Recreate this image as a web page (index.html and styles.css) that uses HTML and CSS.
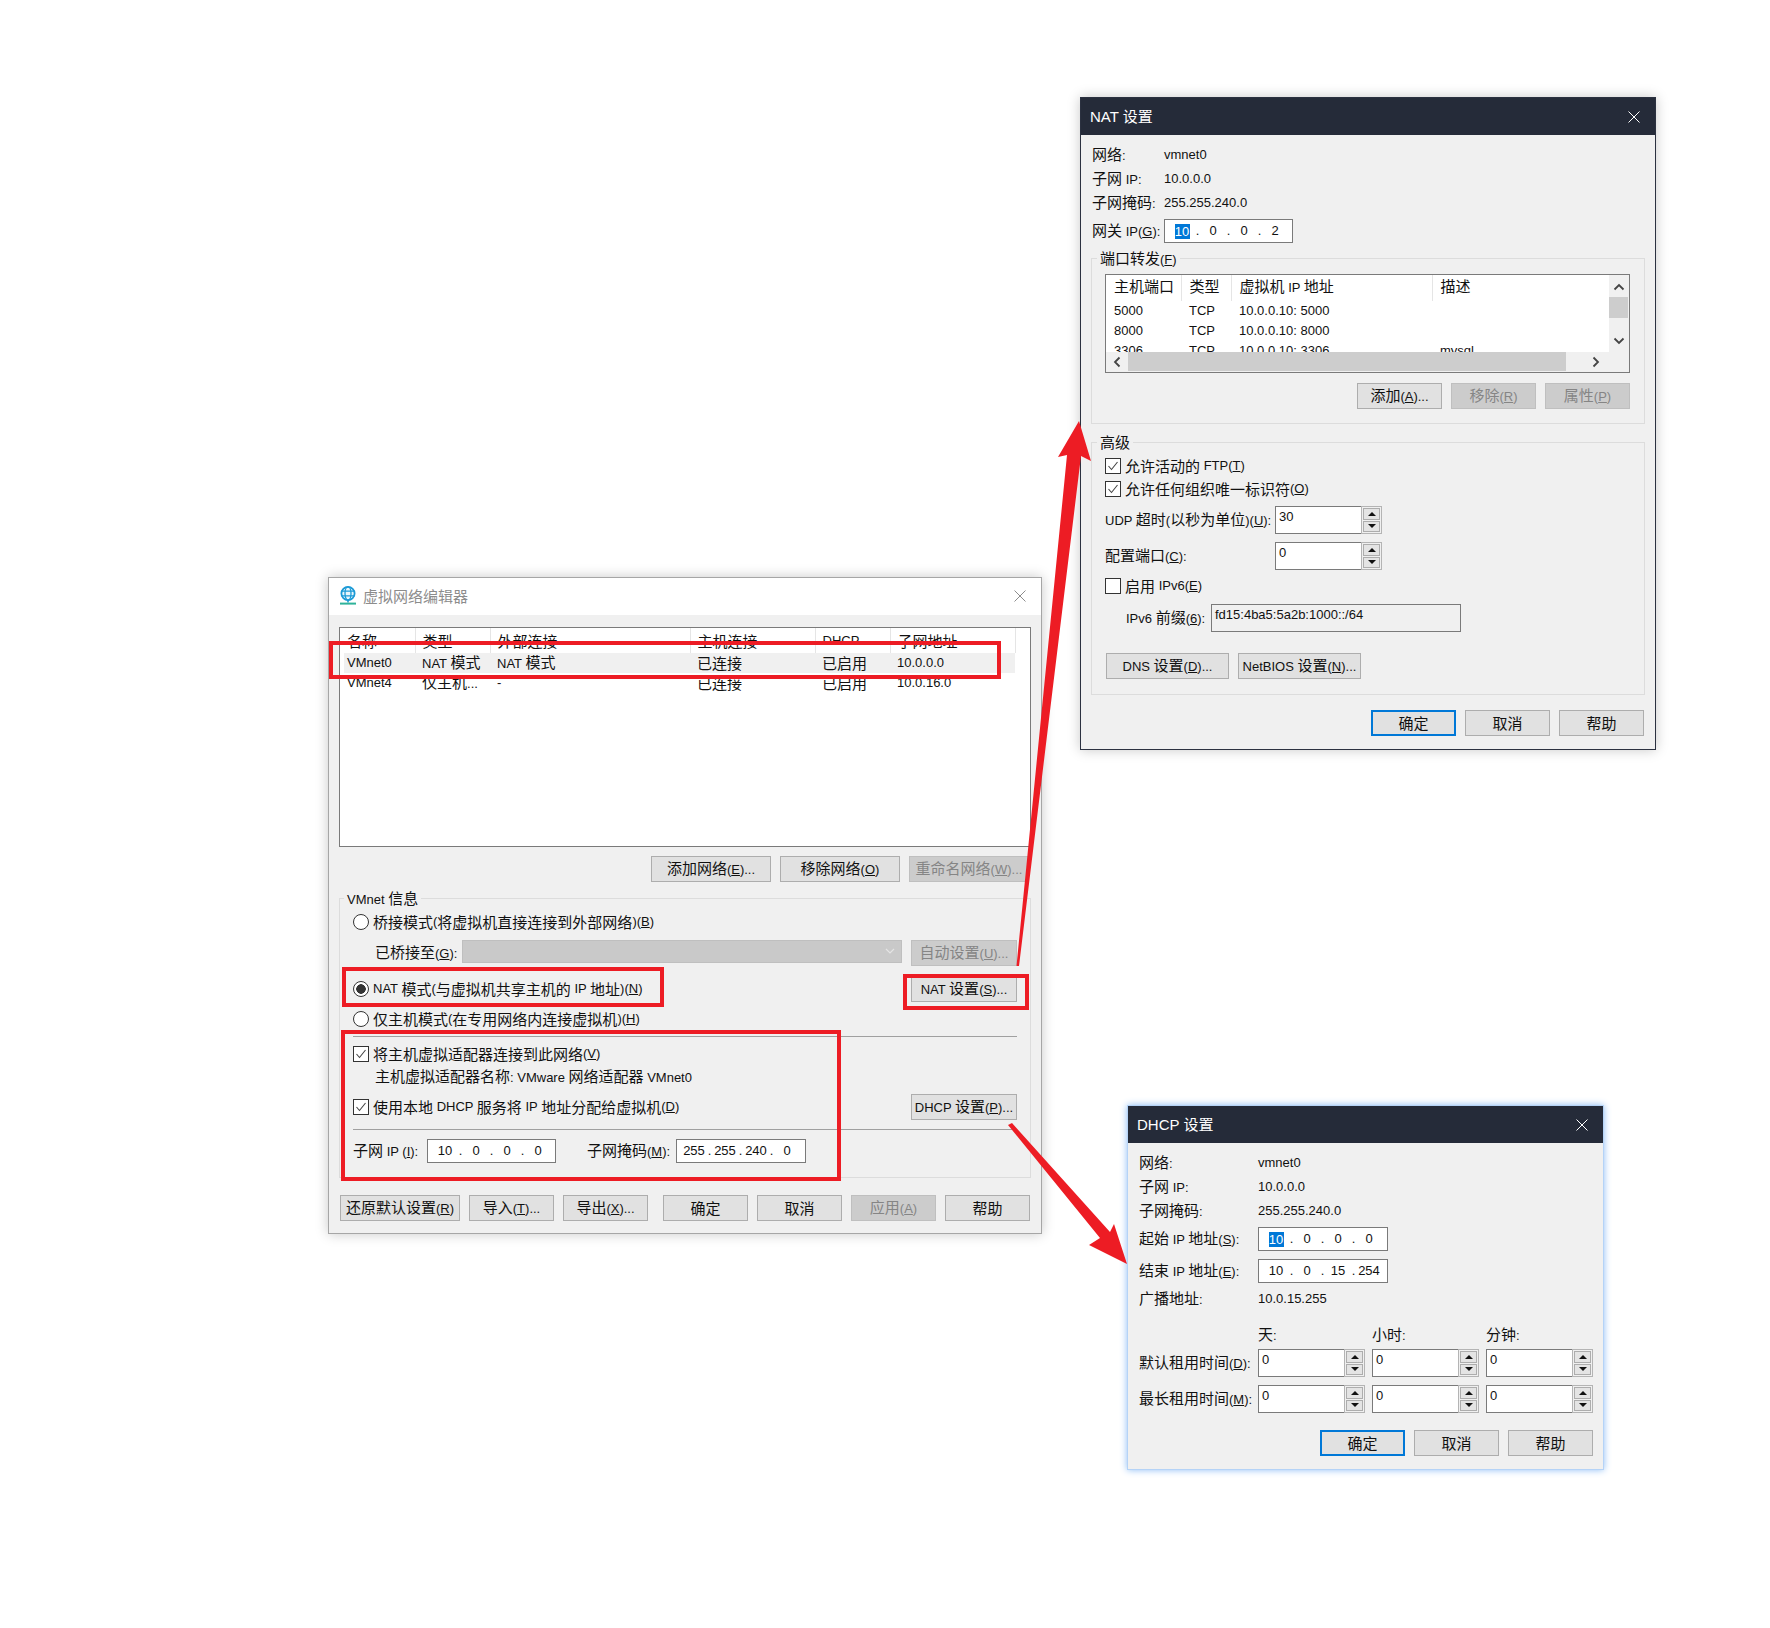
FILE: index.html
```html
<!DOCTYPE html>
<html lang="zh-CN">

<head>
    <meta charset="UTF-8">
    <title>虚拟网络编辑器</title>
    <link rel="stylesheet" href="styles.css">
</head>

<body>
    <!-- 虚拟网络编辑器 -->
    <div class="win win-editor">
        <div class="title">
            <svg class="globe" width="18" height="19" viewBox="0 0 18 19">
                <circle cx="9" cy="7.5" r="6.6" fill="#e8f6fc" stroke="#1b9ad6" stroke-width="1.8"/>
                <ellipse cx="9" cy="7.5" rx="3" ry="6.6" fill="none" stroke="#1b9ad6" stroke-width="1.3"/>
                <path d="M2.4 5.2h13.2M2.4 9.8h13.2" stroke="#1b9ad6" stroke-width="1.3"/>
                <path d="M9 14v2.5" stroke="#1b9ad6" stroke-width="1.6"/>
                <path d="M1 17.6h16" stroke="#2fb39a" stroke-width="2"/>
            </svg>
            <span>虚拟网络编辑器</span>
            <svg class="close" width="12" height="12" viewBox="0 0 12 12"><path d="M0.5 0.5l11 11M11.5 0.5l-11 11"/></svg>
        </div>
        <div class="body">
            <div class="listbox">
                <table class="net-table">
                    <tr><th>名称</th><th>类型</th><th>外部连接</th><th>主机连接</th><th class="en">DHCP</th><th>子网地址</th></tr>
                    <tr class="selected"><td class="en">VMnet0</td><td><span class="en">NAT </span>模式</td><td><span class="en">NAT </span>模式</td><td>已连接</td><td>已启用</td><td class="en">10.0.0.0</td></tr>
                    <tr><td class="en">VMnet4</td><td>仅主机<span class="en">...</span></td><td class="en">-</td><td>已连接</td><td>已启用</td><td class="en">10.0.16.0</td></tr>
                </table>
            </div>
            <div class="btn-row list-btns">
                <button class="btn wide">添加网络<span class="en">(<u>E</u>)...</span></button>
                <button class="btn wide">移除网络<span class="en">(<u>O</u>)</span></button>
                <button class="btn wide" disabled>重命名网络<span class="en">(<u>W</u>)...</span></button>
            </div>
            <fieldset class="group group-vmnet">
                <legend><span class="en">VMnet </span>信息</legend>
                <div class="vmnet-grid">
                    <label class="opt"><span class="radio"></span>桥接模式<span class="en">(</span>将虚拟机直接连接到外部网络<span class="en">)(<u>B</u>)</span></label>
                    <div class="bridge-row">
                        <span class="bridge-label">已桥接至<span class="en">(<u>G</u>):</span></span>
                        <span class="combo"><svg width="10" height="6" viewBox="0 0 10 6"><path d="M1 1l4 4 4-4" fill="none" stroke="#e4e4e4" stroke-width="1.2"/></svg></span>
                        <button class="btn side" disabled>自动设置<span class="en">(<u>U</u>)...</span></button>
                    </div>
                    <div class="split-row">
                        <label class="opt"><span class="radio on"></span><span class="en">NAT </span>模式<span class="en">(</span>与虚拟机共享主机的<span class="en"> IP </span>地址<span class="en">)(<u>N</u>)</span></label>
                        <button class="btn side"><span class="en">NAT </span>设置<span class="en">(<u>S</u>)...</span></button>
                    </div>
                    <label class="opt"><span class="radio"></span>仅主机模式<span class="en">(</span>在专用网络内连接虚拟机<span class="en">)(<u>H</u>)</span></label>
                    <hr class="sep">
                    <label class="opt"><span class="check"><svg width="14" height="14" viewBox="0 0 14 14"><path d="M2.5 7l3 3.5 6-7.5"/></svg></span>将主机虚拟适配器连接到此网络<span class="en">(<u>V</u>)</span></label>
                    <div class="adapter-name">主机虚拟适配器名称<span class="en">: VMware </span>网络适配器<span class="en"> VMnet0</span></div>
                    <div class="split-row">
                        <label class="opt"><span class="check"><svg width="14" height="14" viewBox="0 0 14 14"><path d="M2.5 7l3 3.5 6-7.5"/></svg></span>使用本地<span class="en"> DHCP </span>服务将<span class="en"> IP </span>地址分配给虚拟机<span class="en">(<u>D</u>)</span></label>
                        <button class="btn side"><span class="en">DHCP </span>设置<span class="en">(<u>P</u>)...</span></button>
                    </div>
                    <hr class="sep">
                    <div class="subnet-row">
                        <span class="subnet-ip-label">子网<span class="en"> IP (<u>I</u>):</span></span>
                        <span class="ip ip-short"><span>10</span><i>.</i><span>0</span><i>.</i><span>0</span><i>.</i><span>0</span></span>
                        <span class="subnet-mask-label">子网掩码<span class="en">(<u>M</u>):</span></span>
                        <span class="ip ip-long"><span>255</span><i>.</i><span>255</span><i>.</i><span>240</span><i>.</i><span>0</span></span>
                    </div>
                </div>
            </fieldset>
            <div class="editor-foot">
                <button class="btn wide">还原默认设置<span class="en">(<u>R</u>)</span></button>
                <button class="btn">导入<span class="en">(<u>T</u>)...</span></button>
                <button class="btn">导出<span class="en">(<u>X</u>)...</span></button>
                <button class="btn first-action">确定</button>
                <button class="btn">取消</button>
                <button class="btn" disabled>应用<span class="en">(<u>A</u>)</span></button>
                <button class="btn">帮助</button>
            </div>
        </div>
    </div>

    <!-- NAT 设置 -->
    <div class="win win-dark win-nat">
        <div class="title">
            <span><span class="en-title">NAT </span>设置</span>
            <svg class="close" width="12" height="12" viewBox="0 0 12 12"><path d="M0.5 0.5l11 11M11.5 0.5l-11 11"/></svg>
        </div>
        <div class="body">
            <div class="info-grid nat-info">
                <span>网络<span class="en">:</span></span><span class="en">vmnet0</span>
                <span>子网<span class="en"> IP:</span></span><span class="en">10.0.0.0</span>
                <span>子网掩码<span class="en">:</span></span><span class="en">255.255.240.0</span>
                <span>网关<span class="en"> IP(<u>G</u>):</span></span>
                <span class="ip ip-short"><span><b>10</b></span><i>.</i><span>0</span><i>.</i><span>0</span><i>.</i><span>2</span></span>
            </div>
            <fieldset class="group group-ports">
                <legend>端口转发<span class="en">(<u>F</u>)</span></legend>
                <div class="ports-box">
                    <div class="ports-view">
                        <table class="ports-table">
                            <tr><th>主机端口</th><th>类型</th><th>虚拟机<span class="en"> IP </span>地址</th><th>描述</th></tr>
                            <tr class="en"><td>5000</td><td>TCP</td><td>10.0.0.10: 5000</td><td></td></tr>
                            <tr class="en"><td>8000</td><td>TCP</td><td>10.0.0.10: 8000</td><td></td></tr>
                            <tr class="en"><td>3306</td><td>TCP</td><td>10.0.0.10: 3306</td><td>mysql</td></tr>
                        </table>
                    </div>
                    <div class="vscroll">
                        <svg width="12" height="8" viewBox="0 0 12 8"><path d="M1.5 6.5L6 2l4.500 4.500"/></svg>
                        <span class="vthumb"></span>
                        <svg class="vdown" width="12" height="8" viewBox="0 0 12 8"><path d="M1.500 1.500L6 6l4.500-4.500"/></svg>
                    </div>
                    <div class="hscroll">
                        <svg width="8" height="12" viewBox="0 0 8 12"><path d="M6.500 1.500L2 6l4.500 4.500"/></svg>
                        <span class="hthumb"></span>
                        <svg width="8" height="12" viewBox="0 0 8 12"><path d="M1.500 1.500L6 6l-4.500 4.500"/></svg>
                    </div>
                </div>
                <div class="btn-row ports-btns">
                    <button class="btn">添加<span class="en">(<u>A</u>)...</span></button>
                    <button class="btn" disabled>移除<span class="en">(<u>R</u>)</span></button>
                    <button class="btn" disabled>属性<span class="en">(<u>P</u>)</span></button>
                </div>
            </fieldset>
            <fieldset class="group group-adv">
                <legend>高级</legend>
                <div class="adv-grid">
                    <label class="opt"><span class="check"><svg width="14" height="14" viewBox="0 0 14 14"><path d="M2.5 7l3 3.500 6-7.500"/></svg></span>允许活动的<span class="en"> FTP(<u>T</u>)</span></label>
                    <label class="opt"><span class="check"><svg width="14" height="14" viewBox="0 0 14 14"><path d="M2.5 7l3 3.500 6-7.500"/></svg></span>允许任何组织唯一标识符<span class="en">(<u>O</u>)</span></label>
                    <div class="adv-row">
                        <span class="adv-label"><span class="en">UDP </span>超时<span class="en">(</span>以秒为单位<span class="en">)(<u>U</u>):</span></span>
                        <span class="spin"><span class="spin-val">30</span><span class="spin-btns"><span class="up"></span><span class="down"></span></span></span>
                    </div>
                    <div class="adv-row">
                        <span class="adv-label">配置端口<span class="en">(<u>C</u>):</span></span>
                        <span class="spin"><span class="spin-val">0</span><span class="spin-btns"><span class="up"></span><span class="down"></span></span></span>
                    </div>
                    <label class="opt"><span class="check"></span>启用<span class="en"> IPv6(<u>E</u>)</span></label>
                    <div class="prefix-row">
                        <span class="prefix-label"><span class="en">IPv6 </span>前缀<span class="en">(<u>6</u>):</span></span>
                        <span class="prefix-val">fd15:4ba5:5a2b:1000::/64</span>
                    </div>
                </div>
                <div class="dns-row">
                    <button class="btn dns"><span class="en">DNS </span>设置<span class="en">(<u>D</u>)...</span></button>
                    <button class="btn dns"><span class="en">NetBIOS </span>设置<span class="en">(<u>N</u>)...</span></button>
                </div>
            </fieldset>
            <div class="btn-row nat-foot">
                <button class="btn default">确定</button>
                <button class="btn">取消</button>
                <button class="btn">帮助</button>
            </div>
        </div>
    </div>

    <!-- DHCP 设置 -->
    <div class="win win-dark win-dhcp">
        <div class="title">
            <span><span class="en-title">DHCP </span>设置</span>
            <svg class="close" width="12" height="12" viewBox="0 0 12 12"><path d="M0.5 0.5l11 11M11.5 0.5l-11 11"/></svg>
        </div>
        <div class="body">
            <div class="info-grid dhcp-info">
                <span>网络<span class="en">:</span></span><span class="en">vmnet0</span>
                <span>子网<span class="en"> IP:</span></span><span class="en">10.0.0.0</span>
                <span>子网掩码<span class="en">:</span></span><span class="en">255.255.240.0</span>
                <span>起始<span class="en"> IP </span>地址<span class="en">(<u>S</u>):</span></span>
                <span class="ip ip-long"><span><b>10</b></span><i>.</i><span>0</span><i>.</i><span>0</span><i>.</i><span>0</span></span>
                <span>结束<span class="en"> IP </span>地址<span class="en">(<u>E</u>):</span></span>
                <span class="ip ip-long"><span>10</span><i>.</i><span>0</span><i>.</i><span>15</span><i>.</i><span>254</span></span>
                <span>广播地址<span class="en">:</span></span><span class="en">10.0.15.255</span>
            </div>
            <div class="lease-grid">
                <span></span><span>天<span class="en">:</span></span><span>小时<span class="en">:</span></span><span>分钟<span class="en">:</span></span>
                <span>默认租用时间<span class="en">(<u>D</u>):</span></span>
                <span class="spin"><span class="spin-val">0</span><span class="spin-btns"><span class="up"></span><span class="down"></span></span></span>
                <span class="spin"><span class="spin-val">0</span><span class="spin-btns"><span class="up"></span><span class="down"></span></span></span>
                <span class="spin"><span class="spin-val">0</span><span class="spin-btns"><span class="up"></span><span class="down"></span></span></span>
                <span>最长租用时间<span class="en">(<u>M</u>):</span></span>
                <span class="spin"><span class="spin-val">0</span><span class="spin-btns"><span class="up"></span><span class="down"></span></span></span>
                <span class="spin"><span class="spin-val">0</span><span class="spin-btns"><span class="up"></span><span class="down"></span></span></span>
                <span class="spin"><span class="spin-val">0</span><span class="spin-btns"><span class="up"></span><span class="down"></span></span></span>
            </div>
            <div class="btn-row dhcp-foot">
                <button class="btn default">确定</button>
                <button class="btn">取消</button>
                <button class="btn">帮助</button>
            </div>
        </div>
    </div>

    <!-- 红色标注 -->
    <svg class="marks" width="1770" height="1628" viewBox="0 0 1770 1628">
        <g fill="none" stroke="#ed1c24" stroke-width="4">
            <rect x="331" y="643" width="668" height="34"/>
            <rect x="344" y="969" width="318" height="36"/>
            <rect x="905" y="976" width="122" height="32"/>
            <rect x="343" y="1032" width="496" height="147"/>
        </g>
        <polygon fill="#ed1c24" points="1079,421 1091,461 1081,456 1019,966 1016.500,966 1067,455 1058,457"/>
        <polygon fill="#ed1c24" points="1008,1125 1012,1123 1110,1232 1114,1224 1127,1264 1089,1245 1100,1238"/>
    </svg>
</body>

</html>
```

FILE: styles.css
```css
/* General */
body {
    margin: 0;
    width: 1770px;
    height: 1628px;
    position: relative;
    overflow: hidden;
    background-color: #fff;
    color: #111;
    font-family: "Noto Sans CJK SC", "Liberation Sans", sans-serif;
    font-size: 15px;
    line-height: 20px;
}

.en {
    font-family: "Liberation Sans", "Noto Sans CJK SC", sans-serif;
    font-size: 13px;
}

u {
    text-underline-offset: 1px;
}

/* Windows */
.win {
    position: absolute;
    background-color: #f0f0f0;
    border: 1px solid #a6a6a6;
    box-shadow: 0 0 12px rgba(0, 0, 0, 0.22);
}

.win-editor {
    left: 328px;
    top: 577px;
    width: 712px;
}

.win-nat {
    left: 1080px;
    top: 97px;
    width: 574px;
    border-color: #2b3140;
}

.win-dhcp {
    left: 1127px;
    top: 1105px;
    width: 475px;
    border-color: #b5d3f7;
    box-shadow: 0 0 7px #8dbdf5;
}

.title {
    display: flex;
    align-items: center;
    height: 37px;
    padding: 0 15px 0 10px;
    background-color: #fff;
    color: #8c8c8c;
    font-size: 15px;
}

.win-editor .title {
    box-sizing: border-box;
    padding-bottom: 2px;
}

.globe {
    margin-right: 6px;
}

.close {
    margin-left: auto;
    fill: none;
    stroke: #8c8c8c;
    stroke-width: 1;
}

.win-dark .title {
    padding-left: 9px;
    background-color: #252b39;
    color: #fff;
}

.win-dark .close {
    stroke: #fff;
}

.en-title {
    font-family: "Liberation Sans", sans-serif;
    font-size: 15px;
}

.body {
    padding: 12px 10px 12px;
}

.win-nat .body,
.win-dhcp .body {
    padding-top: 8px;
}

.win-nat .body {
    padding-bottom: 13px;
}

.win-dhcp .body {
    padding-left: 11px;
    padding-bottom: 13px;
}

/* Buttons */
.btn {
    box-sizing: border-box;
    width: 85px;
    height: 26px;
    padding: 0;
    background-color: #e1e1e1;
    border: 1px solid #adadad;
    color: #111;
    font-family: inherit;
    font-size: inherit;
    line-height: 20px;
    white-space: nowrap;
}

.btn.wide {
    width: 120px;
}

.btn.side {
    width: 106px;
}

.btn.dns {
    width: 123px;
}

.btn.default {
    border: 2px solid #0078d7;
}

.btn:disabled {
    background-color: #cccccc;
    border-color: #bfbfbf;
    color: #858585;
}

.btn-row {
    display: flex;
    justify-content: flex-end;
    gap: 9px;
}

/* Lists */
.listbox {
    box-sizing: border-box;
    height: 220px;
    background-color: #fff;
    border: 1px solid #7a7a7a;
}

table {
    table-layout: fixed;
    border-collapse: collapse;
}

th {
    box-sizing: border-box;
    padding: 0 0 0 7px;
    font-weight: normal;
    line-height: 16px;
    text-align: left;
    border-right: 1px solid #e5e5e5;
}

td {
    padding: 0 0 0 7px;
    line-height: 16px;
    white-space: nowrap;
}

.net-table {
    width: 671px;
    margin-left: 4px;
}

.net-table th {
    height: 25px;
}

.net-table th:nth-child(1) { width: 71px; padding-left: 3px; }
.net-table th:nth-child(2) { width: 75px; }
.net-table th:nth-child(3) { width: 200px; }
.net-table th:nth-child(4) { width: 125px; }
.net-table th:nth-child(5) { width: 75px; }
.net-table th:nth-child(6) { width: 125px; }

.net-table td {
    height: 20px;
}

.net-table td:first-child {
    padding-left: 3px;
}

.net-table .selected {
    background-color: #f0f0f0;
}

.list-btns {
    margin: 9px 2px 0 0;
}

/* Groups */
.group {
    margin: 0;
    padding: 0;
    min-width: 0;
    border: 1px solid #dcdcdc;
}

.group legend {
    display: block;
    height: 18px;
    margin-left: 4px;
    padding: 0 3px;
    line-height: 18px;
}

.group-vmnet {
    margin-top: 7px;
}

.vmnet-grid {
    display: grid;
    grid-template-rows: 30px 31px 42px 18px 16px 20px 26px 34px 10px 34px;
    align-items: center;
    padding: 0 14px 9px 13px;
}

.opt {
    display: flex;
    align-items: center;
    white-space: pre;
}

.radio {
    box-sizing: border-box;
    width: 16px;
    height: 16px;
    margin-right: 4px;
    background-color: #fff;
    border: 1px solid #333;
    border-radius: 50%;
}

.radio.on {
    background: radial-gradient(circle, #333 0 4.5px, #fff 5px);
}

.check {
    box-sizing: border-box;
    display: flex;
    width: 16px;
    height: 16px;
    margin-right: 4px;
    background-color: #fff;
    border: 1px solid #333;
}

.check svg {
    fill: none;
    stroke: #444;
    stroke-width: 1.1;
}

.opt .en {
    white-space: pre;
}

.bridge-row,
.split-row,
.subnet-row,
.adv-row,
.prefix-row {
    display: flex;
    align-items: center;
}

.split-row {
    justify-content: space-between;
}

.bridge-row {
    padding-left: 22px;
}

.bridge-label {
    width: 87px;
}

.combo {
    box-sizing: border-box;
    display: flex;
    align-items: center;
    justify-content: flex-end;
    align-self: flex-start;
    width: 440px;
    height: 23px;
    margin-right: 9px;
    padding-right: 6px;
    background-color: #c9c9c9;
    border: 1px solid #bfbfbf;
}

.sep {
    width: 100%;
    margin: 0;
    border: 0;
    border-top: 1px solid #a0a0a0;
}

.adapter-name {
    padding-left: 22px;
}

.subnet-ip-label {
    width: 74px;
}

.subnet-mask-label {
    width: 89px;
    margin-left: 31px;
}

/* IP fields */
.ip {
    box-sizing: border-box;
    display: flex;
    align-items: center;
    height: 24px;
    padding-left: 6px;
    background-color: #fff;
    border: 1px solid #7a7a7a;
    font-family: "Liberation Sans", sans-serif;
    font-size: 13px;
}

.ip-short {
    width: 129px;
}

.ip-long {
    width: 130px;
}

.ip span {
    width: 22px;
    text-align: center;
}

.ip i {
    width: 9px;
    font-style: normal;
    text-align: center;
}

.ip b {
    display: block;
    width: 15px;
    height: 15px;
    margin: 0 auto;
    background-color: #0078d7;
    color: #fff;
    font-weight: normal;
    line-height: 15px;
}

/* Info rows */
.info-grid {
    display: grid;
    align-items: center;
    white-space: pre;
}

.nat-info {
    grid-template-columns: 72px auto;
    grid-template-rows: 24px 24px 24px 32px;
    justify-content: start;
    padding-left: 1px;
}

.dhcp-info {
    grid-template-columns: 119px auto;
    grid-template-rows: 24px 24px 24px 32px 32px 24px;
    justify-content: start;
}

/* Port forwarding */
.group-ports {
    margin-top: 2px;
    padding: 0 14px 14px 13px;
}

.group-ports legend,
.group-adv legend {
    margin-left: -8px;
}

.ports-box {
    box-sizing: border-box;
    display: grid;
    grid-template-columns: 503px 1fr;
    grid-template-rows: 77px 1fr;
    height: 99px;
    margin-top: 7px;
    background-color: #f0f0f0;
    border: 1px solid #7a7a7a;
}

.ports-view {
    overflow: hidden;
    background-color: #fff;
}

.ports-table {
    width: 403px;
}

.ports-table th {
    height: 26px;
    padding-left: 8px;
    vertical-align: top;
    padding-top: 3px;
}

.ports-table th:nth-child(1) { width: 75px; }
.ports-table th:nth-child(2) { width: 50px; }
.ports-table th:nth-child(3) { width: 201px; }
.ports-table th:nth-child(4) { width: 77px; border-right: 0; }

.ports-table td {
    height: 20px;
    padding-left: 8px;
}

.vscroll {
    display: flex;
    flex-direction: column;
    align-items: center;
    width: 19px;
    padding-top: 8px;
    box-sizing: border-box;
}

.vscroll svg,
.hscroll svg {
    flex: none;
    fill: none;
    stroke: #444;
    stroke-width: 1.8;
}

.vthumb {
    flex: none;
    width: 19px;
    height: 21px;
    margin-top: 6px;
    background-color: #cdcdcd;
}

.vdown {
    margin-top: 19px;
}

.hscroll {
    grid-column: 1 / 3;
    display: flex;
    align-items: center;
    height: 19px;
    padding-left: 7px;
}

.hthumb {
    width: 438px;
    height: 19px;
    margin: 0 26px 0 7px;
    background-color: #cdcdcd;
}

.ports-btns {
    margin-top: 10px;
}

/* Advanced */
.group-adv {
    margin-top: 9px;
    padding: 0 0 15px 13px;
}

.adv-grid {
    display: grid;
    grid-template-rows: 30px 16px 46px 26px 34px 30px;
    align-items: center;
}

.adv-label {
    width: 170px;
}

.spin {
    box-sizing: border-box;
    display: flex;
    width: 107px;
    height: 28px;
}

.spin-val {
    box-sizing: border-box;
    flex: 1;
    padding-left: 3px;
    background-color: #fff;
    border: 1px solid #7a7a7a;
    border-right: 0;
    font-family: "Liberation Sans", sans-serif;
    font-size: 13px;
    line-height: 20px;
}

.spin-btns {
    box-sizing: border-box;
    display: flex;
    flex-direction: column;
    gap: 1px;
    width: 21px;
    padding: 1px;
    background-color: #f0f0f0;
    border: 1px solid #b4b4b4;
}

.spin-btns span {
    flex: 1;
    display: flex;
    align-items: center;
    justify-content: center;
    background-color: #e4e4e4;
    border: 1px solid #adadad;
}

.spin-btns span::before {
    content: "";
    border-left: 4px solid transparent;
    border-right: 4px solid transparent;
}

.spin-btns .up::before {
    border-bottom: 4px solid #111;
}

.spin-btns .down::before {
    border-top: 4px solid #111;
}

.prefix-row {
    padding-left: 21px;
}

.prefix-label {
    width: 85px;
}

.prefix-val {
    box-sizing: border-box;
    width: 250px;
    height: 28px;
    padding-left: 3px;
    border: 1px solid #7a7a7a;
    font-family: "Liberation Sans", sans-serif;
    font-size: 13px;
}

.dns-row {
    display: flex;
    gap: 9px;
    margin: 20px 0 0 1px;
}

.nat-foot {
    margin: 15px 1px 0 0;
}

/* Editor footer */
.editor-foot {
    display: flex;
    gap: 9px;
    margin: 17px 0 0 1px;
}

.first-action {
    margin-left: 6px;
}

/* DHCP */
.lease-grid {
    display: grid;
    grid-template-columns: 112px 107px 107px 107px;
    grid-template-rows: 24px 32px 40px;
    column-gap: 7px;
    align-items: center;
    margin-top: 12px;
    white-space: nowrap;
}

.dhcp-foot {
    margin-top: 11px;
}

/* Annotations */
.marks {
    position: absolute;
    left: 0;
    top: 0;
    pointer-events: none;
}
```
